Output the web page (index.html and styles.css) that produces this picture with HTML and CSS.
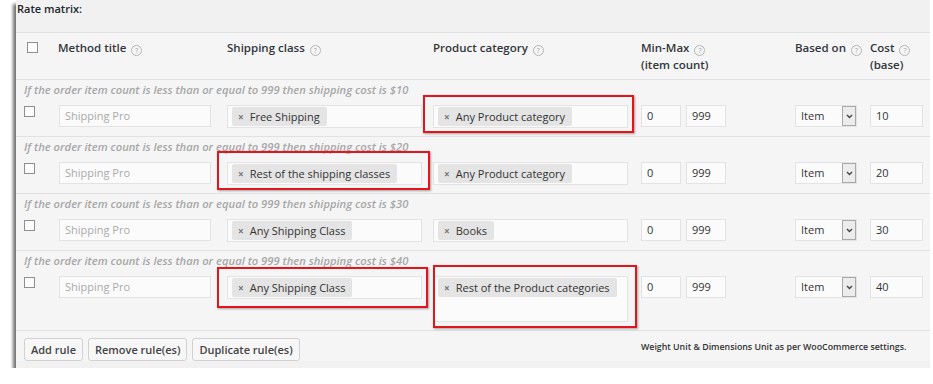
FILE: index.html
```html
<!DOCTYPE html>
<html lang="en">
<head>
    <meta charset="UTF-8">
    <title>Rate matrix</title>
    <link rel="stylesheet" href="styles.css">
</head>
<body>

    <div class="panel">
        <div class="title">Rate matrix:</div>

        <div class="matrix">
            <!-- Column headings -->
            <div class="row head">
                <div><span class="cb"></span></div>
                <div>Method title <span class="help">?</span></div>
                <div>Shipping class <span class="help">?</span></div>
                <div>Product category <span class="help">?</span></div>
                <div>Min-Max <span class="help">?</span><br>(item count)</div>
                <div>Based on <span class="help">?</span></div>
                <div>Cost <span class="help">?</span><br>(base)</div>
            </div>

            <!-- Rules -->
            <div class="rule">
                <div class="note">If the order item count is less than or equal to 999 then shipping cost is $10</div>
                <div class="row">
                    <div><span class="cb"></span></div>
                    <div><span class="field title-field">Shipping Pro</span></div>
                    <div><div class="tags"><span class="tag"><b>×</b>Free Shipping</span></div></div>
                    <div><div class="tags"><span class="tag"><b>×</b>Any Product category</span></div></div>
                    <div class="minmax"><span class="field num">0</span><span class="field num">999</span></div>
                    <div><span class="select">Item<i><svg width="7" height="5" viewBox="0 0 7 5"><path d="M1 1l2.5 2.5L6 1" fill="none" stroke="#444" stroke-width="1.4"/></svg></i></span></div>
                    <div><span class="field cost">10</span></div>
                </div>
            </div>

            <div class="rule">
                <div class="note">If the order item count is less than or equal to 999 then shipping cost is $20</div>
                <div class="row">
                    <div><span class="cb"></span></div>
                    <div><span class="field title-field">Shipping Pro</span></div>
                    <div><div class="tags"><span class="tag"><b>×</b>Rest of the shipping classes</span></div></div>
                    <div><div class="tags"><span class="tag"><b>×</b>Any Product category</span></div></div>
                    <div class="minmax"><span class="field num">0</span><span class="field num">999</span></div>
                    <div><span class="select">Item<i><svg width="7" height="5" viewBox="0 0 7 5"><path d="M1 1l2.5 2.5L6 1" fill="none" stroke="#444" stroke-width="1.4"/></svg></i></span></div>
                    <div><span class="field cost">20</span></div>
                </div>
            </div>

            <div class="rule">
                <div class="note">If the order item count is less than or equal to 999 then shipping cost is $30</div>
                <div class="row">
                    <div><span class="cb"></span></div>
                    <div><span class="field title-field">Shipping Pro</span></div>
                    <div><div class="tags"><span class="tag"><b>×</b>Any Shipping Class</span></div></div>
                    <div><div class="tags"><span class="tag"><b>×</b>Books</span></div></div>
                    <div class="minmax"><span class="field num">0</span><span class="field num">999</span></div>
                    <div><span class="select">Item<i><svg width="7" height="5" viewBox="0 0 7 5"><path d="M1 1l2.5 2.5L6 1" fill="none" stroke="#444" stroke-width="1.4"/></svg></i></span></div>
                    <div><span class="field cost">30</span></div>
                </div>
            </div>

            <div class="rule">
                <div class="note">If the order item count is less than or equal to 999 then shipping cost is $40</div>
                <div class="row">
                    <div><span class="cb"></span></div>
                    <div><span class="field title-field">Shipping Pro</span></div>
                    <div><div class="tags"><span class="tag"><b>×</b>Any Shipping Class</span></div></div>
                    <div><div class="tags tall"><span class="tag"><b>×</b>Rest of the Product categories</span></div></div>
                    <div class="minmax"><span class="field num">0</span><span class="field num">999</span></div>
                    <div><span class="select">Item<i><svg width="7" height="5" viewBox="0 0 7 5"><path d="M1 1l2.5 2.5L6 1" fill="none" stroke="#444" stroke-width="1.4"/></svg></i></span></div>
                    <div><span class="field cost">40</span></div>
                </div>
            </div>

            <!-- Actions -->
            <div class="foot">
                <div class="actions">
                    <button>Add rule</button>
                    <button>Remove rule(es)</button>
                    <button>Duplicate rule(es)</button>
                </div>
                <span class="units">Weight Unit &amp; Dimensions Unit as per WooCommerce settings.</span>
            </div>
        </div>

        <!-- red highlight annotations -->
        <div class="mark mark-1"></div>
        <div class="mark mark-2"></div>
        <div class="mark mark-3"></div>
        <div class="mark mark-4"></div>
    </div>

</body>
</html>
```

FILE: styles.css
```css
body {
    margin: 0;
    background-color: #fff;
    font-family: "Open Sans", "DejaVu Sans", sans-serif;
    color: #333;
}

.panel {
    position: relative;
    margin-left: 16px;
    width: 914px;
    height: 368px;
    background-color: #f1f1f1;
    box-shadow: -3px 4px 3px rgba(0, 0, 0, 0.55);
}

.title {
    padding-left: 1px;
    font-size: 11px;
    font-weight: 600;
    line-height: 18px;
    color: #23282d;
}

.matrix {
    margin-top: 14px;
    background-color: #f5f5f5;
    border-top: 1px solid #e1e1e1;
}

.row {
    display: grid;
    grid-template-columns: 35px 168px 206px 208px 154px 75px 53px;
    padding-left: 8px;
}

.head {
    box-sizing: border-box;
    height: 47px;
    padding-top: 6px;
    font-size: 11.5px;
    font-weight: 600;
    line-height: 17px;
    color: #32373c;
    border-bottom: 1px solid #e1e1e1;
}

.head > div:nth-child(2) {
    margin-left: -1px;
}

.head .cb {
    margin-top: 3px;
    margin-left: 3px;
}

.help {
    display: inline-block;
    width: 9px;
    height: 9px;
    margin-left: 2px;
    border: 1px solid #b5b5b5;
    border-radius: 50%;
    font-size: 7px;
    font-weight: 400;
    line-height: 9px;
    text-align: center;
    color: #a5a5a5;
    vertical-align: -1px;
}

.cb {
    display: block;
    width: 9px;
    height: 9px;
    border: 1px solid #8e8e8e;
    background-color: #fff;
}

.rule {
    padding: 0 0 8px;
    border-bottom: 1px solid #e1e1e1;
}

.note {
    padding-left: 8px;
    margin-bottom: 6px;
    font-size: 11.2px;
    font-style: italic;
    font-weight: 600;
    line-height: 19px;
    color: #a7a7a7;
    white-space: nowrap;
}

.rule .cb {
    margin-top: 1px;
}

.field {
    display: block;
    box-sizing: border-box;
    height: 22px;
    padding-left: 5px;
    background-color: #fbfbfb;
    border: 1px solid #e3e3e3;
    font-size: 11px;
    line-height: 20px;
    color: #333;
}

.title-field {
    width: 152px;
    color: #aaa;
}

.minmax {
    display: flex;
    gap: 5px;
}

.num {
    width: 40px;
}

.cost {
    width: 53px;
}

.tags {
    display: flex;
    align-items: flex-start;
    box-sizing: border-box;
    width: 195px;
    height: 23px;
    padding: 1px 4px;
    background-color: #fbfbfb;
    border: 1px solid #e3e3e3;
}

.tags.tall {
    height: 46px;
}

.tag {
    display: block;
    height: 19px;
    padding: 0 7px 0 6px;
    background-color: #e4e4e4;
    border-radius: 2px;
    font-size: 11px;
    line-height: 19px;
    color: #333;
    white-space: nowrap;
}

.tag b {
    margin-right: 6px;
    font-size: 10px;
    color: #777;
}

.select {
    display: flex;
    justify-content: space-between;
    box-sizing: border-box;
    width: 62px;
    height: 22px;
    padding-left: 5px;
    background-color: #fbfbfb;
    border: 1px solid #e3e3e3;
    font-size: 11px;
    line-height: 20px;
}

.select i {
    display: flex;
    align-items: center;
    justify-content: center;
    box-sizing: border-box;
    width: 14px;
    background-color: #ececec;
    border: 1px solid #a9a9a9;
}

.foot {
    display: flex;
    align-items: center;
    padding: 7px 0 0 8px;
}

.actions {
    display: flex;
    gap: 5px;
    width: 617px;
    flex-shrink: 0;
}

.foot button {
    height: 23px;
    padding: 0 6px;
    background-color: #f7f7f7;
    border: 1px solid #d2d2d2;
    border-radius: 3px;
    font-family: "Open Sans", "DejaVu Sans", sans-serif;
    font-size: 11px;
    font-weight: 600;
    color: #444;
    white-space: nowrap;
}

.units {
    margin-top: -6px;
    font-size: 8.8px;
    font-weight: 600;
    color: #333;
    white-space: nowrap;
}

.mark {
    position: absolute;
    border: 2px solid #e3141b;
    box-shadow: 1px 1px 2px rgba(0, 0, 0, 0.35);
}

.mark-1 { left: 407px; top: 95px; width: 207px; height: 34px; }
.mark-2 { left: 201px; top: 151px; width: 209px; height: 35px; }
.mark-3 { left: 201px; top: 267px; width: 207px; height: 37px; }
.mark-4 { left: 417px; top: 265px; width: 200px; height: 59px; }
```
